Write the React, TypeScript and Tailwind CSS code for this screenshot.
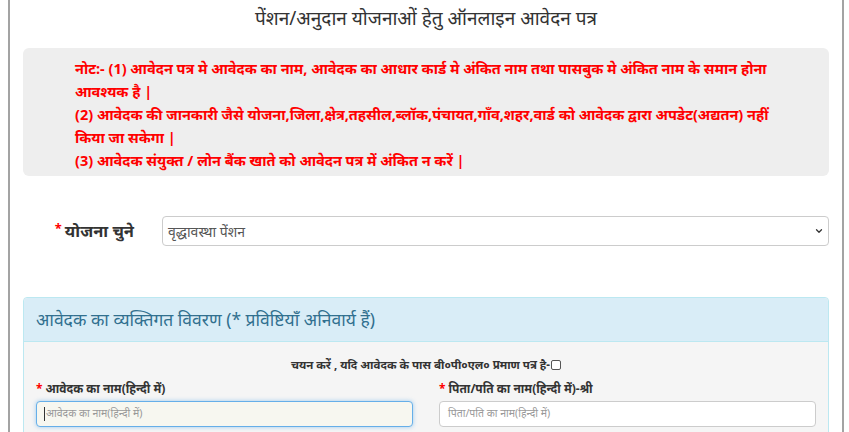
import { ChevronDown } from "lucide-react";

const font = { fontFamily: '"Noto Sans", "Liberation Sans", sans-serif' };

const noteLines = [
  "नोट:- (1) आवेदन पत्र मे आवेदक का नाम, आवेदक का आधार कार्ड मे अंकित नाम तथा पासबुक मे अंकित नाम के समान होना",
  "आवश्यक है |",
  "(2) आवेदक की जानकारी जैसे योजना,जिला,क्षेत्र,तहसील,ब्लॉक,पंचायत,गाँव,शहर,वार्ड को आवेदक द्वारा अपडेट(अद्यतन) नहीं",
  "किया जा सकेगा |",
  "(3) आवेदक संयुक्त / लोन बैंक खाते को आवेदन पत्र में अंकित न करें |",
];

export default function App() {
  return (
    <div
      className="h-[432px] w-[849px] overflow-hidden bg-white text-[#333]"
      style={font}
    >
      <div className="ml-[8px] min-h-[432px] w-[836px] border-x-2 border-[#a3a3a3] px-[13px]">
        <h1 className="pt-[4px] text-center text-[19px] leading-[28px] font-normal text-[#333]">
          पेंशन/अनुदान योजनाओं हेतु ऑनलाइन आवेदन पत्र
        </h1>

        {/* note */}
        <div className="mt-[16px] h-[128px] rounded-md bg-[#eeeeee] pl-[52px] pr-[30px] pt-[9px]">
          {noteLines.map((line) => (
            <p
              key={line}
              className="whitespace-nowrap text-[14.5px] leading-[23px] font-bold text-[#ff0000]"
            >
              {line}
            </p>
          ))}
        </div>

        {/* scheme select */}
        <div className="mt-[40px] flex items-center">
          <label className="flex w-[139px] items-start justify-end pr-[28px] text-[16.5px] font-bold text-[#333]">
            <span className="mr-[3px] text-[13px] text-[#ff0000]">*</span>
            योजना चुने
          </label>
          <div className="flex h-[30px] flex-1 items-center justify-between rounded-[4px] border border-[#cccccc] bg-white pl-[5px] pr-[4px] text-[14px] text-[#555]">
            <span>वृद्धावस्था पेंशन</span>
            <ChevronDown className="h-[10px] w-[10px] text-[#333]" strokeWidth={3} />
          </div>
        </div>

        {/* personal details panel */}
        <div className="mt-[51px] rounded-[4px] border border-[#bce8f1] bg-[#f5f5f5]">
          <div className="flex h-[44px] items-center rounded-t-[4px] border-b border-[#bce8f1] bg-[#d9edf7] px-[12px] text-[17.5px] text-[#31708f]">
            आवेदक का व्यक्तिगत विवरण (* प्रविष्टियाँ अनिवार्य हैं)
          </div>
          <div className="px-[12px] pb-[20px] pt-[14px]">
            <div className="flex items-center justify-center text-[11.5px] font-bold text-[#333]">
              चयन करें , यदि आवेदक के पास बी०पी०एल० प्रमाण पत्र है-
              <span className="ml-[1px] inline-block h-[10px] w-[10px] rounded-[2px] border border-[#555] bg-white" />
            </div>
            <div className="mt-[6px] grid grid-cols-2 gap-x-[26px]">
              <div>
                <div className="flex items-center text-[12px] font-bold leading-[20px]">
                  <span className="mr-[3px] text-[12px] text-[#ff0000]">*</span>
                  आवेदक का नाम(हिन्दी में)
                </div>
                <div className="mt-[2px] flex h-[26px] items-center rounded-[4px] border border-[#66afe9] bg-[#f7f7f0] pl-[7px] text-[10.5px] text-[#999] shadow-[0_0_4px_rgba(102,175,233,0.6)]">
                  <span className="mr-[1px] h-[14px] w-px bg-[#333]" />
                  आवेदक का नाम(हिन्दी में)
                </div>
              </div>
              <div>
                <div className="flex items-center text-[12px] font-bold leading-[20px]">
                  <span className="mr-[3px] text-[12px] text-[#ff0000]">*</span>
                  पिता/पति का नाम(हिन्दी में)-श्री
                </div>
                <div className="mt-[2px] flex h-[26px] items-center rounded-[4px] border border-[#cccccc] bg-white pl-[8px] text-[10.5px] text-[#999]">
                  पिता/पति का नाम(हिन्दी में)
                </div>
              </div>
            </div>
          </div>
        </div>
      </div>
    </div>
  );
}
